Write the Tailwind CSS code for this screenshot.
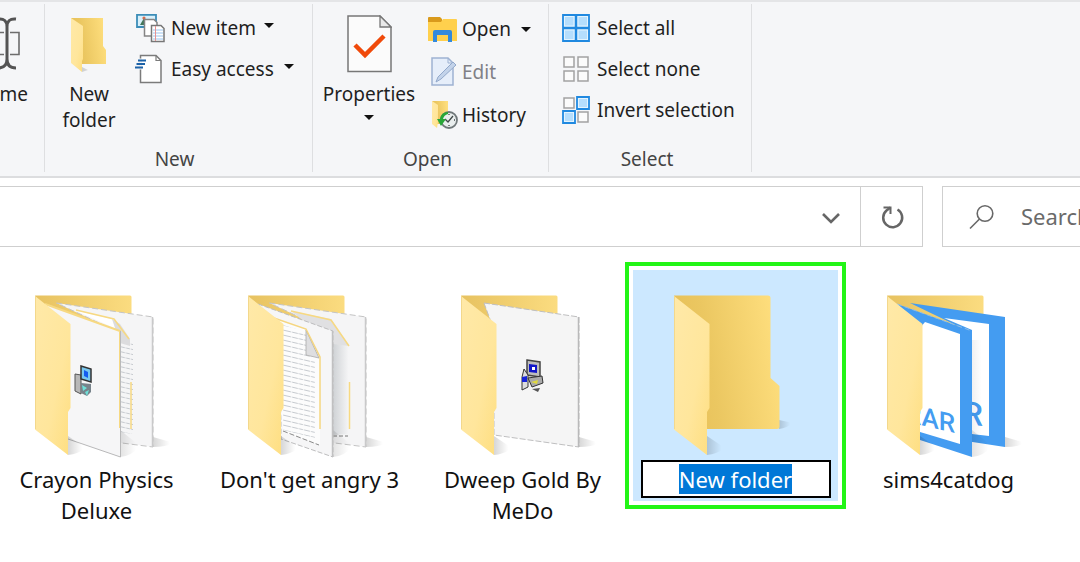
<!DOCTYPE html>
<html lang="en">
<head>
<meta charset="utf-8">
<title>File Explorer</title>
<script src="https://cdn.jsdelivr.net/npm/@tailwindcss/browser@4"></script>
</head>
<body class="min-h-screen overflow-x-hidden bg-white font-['Noto_Sans','Open_Sans',sans-serif] text-[#1f1f1f]">

<svg class="absolute h-0 w-0" aria-hidden="true">
  <defs>
    <linearGradient id="flap" x1="0" y1="0" x2="1" y2="1"><stop offset="0" stop-color="#ffe9a8"/><stop offset=".6" stop-color="#ffe69c"/><stop offset="1" stop-color="#fede80"/></linearGradient>
    <linearGradient id="back" x1="0" y1=".6" x2="1" y2=".4"><stop offset="0" stop-color="#e6bf57"/><stop offset=".35" stop-color="#ebc761"/><stop offset="1" stop-color="#fede7d"/></linearGradient>
    <linearGradient id="rim" x1="0" y1="0" x2="1" y2="0"><stop offset="0" stop-color="#e7c260"/><stop offset="1" stop-color="#fbdc80"/></linearGradient>
    <linearGradient id="shade" x1="0" y1="0" x2="1" y2="0"><stop offset="0" stop-color="#000" stop-opacity=".16"/><stop offset=".8" stop-color="#000" stop-opacity="0"/></linearGradient>
    <linearGradient id="pageShade" x1="0" y1="0" x2="1" y2="0"><stop offset="0" stop-color="#cfd2d5"/><stop offset="1" stop-color="#f6f6f7"/></linearGradient>
    <pattern id="lines" width="40" height="5" patternUnits="userSpaceOnUse" patternTransform="skewY(13)"><path d="M0 2.500H40" stroke="#c6cacf" stroke-width="1" stroke-dasharray="4 1 6 1"/></pattern>
    <symbol id="folder-flap" viewBox="0 0 205 188"><path d="M74 166L92 178Q84 184 74 185Z" fill="url(#shade)"/><path d="M41 26L76.500 54V138L74 142V185L41 159.500Z" fill="url(#flap)"/><path d="M41.500 26V159" stroke="#f3d88c" stroke-width="1"/></symbol>
    <symbol id="folder-rim" viewBox="0 0 205 188"><path d="M41 25.500H136Q137.500 25.500 137.500 27V60H60Z" fill="url(#rim)"/><path d="M159 167L180 173Q172 177 159 177Z" fill="url(#shade)"/></symbol>
  </defs>
</svg>

<header class="overflow-hidden border-t-2 border-b-2 border-t-[#e4e5e7] border-b-[#dcdddf] bg-[#f5f6f8] pt-0.5 pb-1 text-[19px] leading-[26px]">
  <div class="flex h-[168px]">
    <section class="flex w-[45px] justify-end border-r border-[#dedfe1]" aria-label="Organize">
      <button class="flex shrink-0 flex-col items-end pt-[11px] pr-4">
        <svg class="mr-2 h-[56px] w-[40px]" viewBox="0 0 40 56" fill="none" aria-hidden="true"><path d="M0 17.500H39V39.500H0" stroke="#6d6d6d" stroke-width="1.600"/><path d="M27 16V41" stroke="#f5f6f8" stroke-width="6"/><path d="M18 4Q27 3 27 12V44Q27 53 18 53M36 4Q27 3 27 12V44Q27 53 36 53" stroke="#545454" stroke-width="3"/></svg>
        <span class="mt-2.5">Rename</span>
      </button>
    </section>

    <section class="flex w-[268px] flex-col justify-between border-r border-[#dedfe1]" aria-labelledby="g-new">
      <div class="flex">
        <button class="ml-[11px] flex w-[66px] flex-col items-center pt-[11px]">
          <svg class="h-[58px] w-[44px]" viewBox="0 0 44 58" aria-hidden="true"><path d="M4 3H36V31L39 35V49H14Z" fill="url(#back)"/><path d="M4 3L16 11V44L15 46V57L4 48Z" fill="url(#flap)"/><path d="M15 52L21 55L15 57ZM39 45L43 47L39 49Z" fill="url(#shade)"/></svg>
          <span class="mt-2">New<br>folder</span>
        </button>
        <div class="ml-[13px] flex flex-col items-start gap-[11px] pt-[9px]">
          <button class="flex h-[30px] items-center gap-1.5">
            <svg class="h-[30px] w-[30px]" viewBox="0 0 30 30" fill="none" aria-hidden="true"><path d="M2 1.800H21V14H2Z" fill="#d8f0fb" stroke="#3c8db8" stroke-width="1.800"/><path d="M5 12L9 5L12 12Z" fill="#42765a"/><circle cx="9" cy="5" r="1.600" fill="#d76a4b"/><path d="M9.500 6.500H19L22 9.500V23H9.500Z" fill="#fff" stroke="#858585" stroke-width="1.500"/><path d="M16.500 12.500H26L29 15.500V28.500H16.500Z" fill="#fff" stroke="#777" stroke-width="1.500"/><path d="M18 17H28M18 20H28M18 23H28M18 26H28" stroke="#9ac4ee"/><path d="M20.500 13V28" stroke="#e79393"/></svg>
            <span>New item</span>
            <svg class="mb-1.5 ml-0.5 h-[5px] w-[10px]" viewBox="0 0 10 5" aria-hidden="true"><path d="M0 0H10L5 5Z" fill="#111"/></svg>
          </button>
          <button class="flex h-[30px] items-center gap-1.5">
            <svg class="h-[30px] w-[30px]" viewBox="0 0 30 30" fill="none" aria-hidden="true"><path d="M5.500 1.500H21L26 6.500V28.500H5.500Z" fill="#fff" stroke="#7b7b7b" stroke-width="1.500"/><path d="M21 1.500V6.500H26" stroke="#7b7b7b" stroke-width="1.200"/><path d="M5.500 4.500V15.500" stroke="#f5f6f8" stroke-width="2.500"/><path d="M3 6.500H11M1.500 10H10M0 13.500H8" stroke="#1c62a8" stroke-width="1.800"/></svg>
            <span>Easy access</span>
            <svg class="mb-1.5 ml-1 h-[5px] w-[10px]" viewBox="0 0 10 5" aria-hidden="true"><path d="M0 0H10L5 5Z" fill="#111"/></svg>
          </button>
        </div>
      </div>
      <h2 id="g-new" class="pr-2 text-center text-[#444]">New</h2>
    </section>

    <section class="flex w-[236px] flex-col justify-between border-r border-[#dedfe1]" aria-labelledby="g-open">
      <div class="flex">
        <button class="ml-2 flex w-[96px] flex-col items-center pt-[11px]">
          <svg class="h-[58px] w-[46px]" viewBox="0 0 46 58" fill="none" aria-hidden="true"><path d="M2 1H34L45 12V56.500H2Z" fill="#fbfbfb" stroke="#777" stroke-width="1.500"/><path d="M34 1V12H45Z" fill="#e9e9e9" stroke="#777" stroke-width="1.300"/><path d="M9 30L19 40L38 21" stroke="#f04a0a" stroke-width="4.500"/></svg>
          <span class="mt-2">Properties</span>
          <svg class="mt-2 h-[5px] w-[10px]" viewBox="0 0 10 5" aria-hidden="true"><path d="M0 0H10L5 5Z" fill="#111"/></svg>
        </button>
        <div class="ml-[11px] flex flex-col items-start gap-[13px] pt-2.5">
          <button class="flex h-[30px] items-center gap-1">
            <svg class="h-[30px] w-[30px]" viewBox="0 0 30 30" aria-hidden="true"><path d="M0 4Q0 3 1 3H12L14 5V8H0Z" fill="#d99a1c"/><path d="M0 8H13L15 5H28Q29 5 29 6V27H0Z" fill="#ffd04d"/><path d="M5 28V18Q5 16 7 16H22Q24 16 24 18V28H20V21H9V28Z" fill="#3289dc"/></svg>
            <span>Open</span>
            <svg class="ml-1.5 h-[5px] w-[10px]" viewBox="0 0 10 5" aria-hidden="true"><path d="M0 0H10L5 5Z" fill="#111"/></svg>
          </button>
          <button class="flex h-[30px] items-center gap-1 text-[#808086]" disabled>
            <svg class="h-[30px] w-[30px]" viewBox="0 0 30 30" fill="none" aria-hidden="true"><path d="M4 1H20L25 6V28H4Z" fill="#e6eefa" stroke="#9eb2d2" stroke-width="1.500"/><path d="M20 1V6H25" stroke="#9eb2d2"/><path d="M8 25L10 20L25 5L28 8L13 22Z" fill="#c3d3ea" stroke="#93a9cb"/></svg>
            <span>Edit</span>
          </button>
          <button class="flex h-[30px] items-center gap-1">
            <svg class="h-[30px] w-[30px]" viewBox="0 0 30 30" fill="none" aria-hidden="true"><path d="M4 1H20V24H8Z" fill="url(#back)"/><path d="M4 1L10 5V22L9 28L4 24Z" fill="url(#flap)"/><circle cx="21" cy="20" r="8" fill="#e9eeee" stroke="#70787a" stroke-width="1.800"/><path d="M17 19L20 22L25 16M21 14V15M21 25V26M26 20H27" stroke="#404848" stroke-width="1.300"/><path d="M20 12Q13 12 12 19H9L13 26L18 19H15Q16 15 20 14Z" fill="#28a638"/></svg>
            <span>History</span>
          </button>
        </div>
      </div>
      <h2 id="g-open" class="pr-1.5 text-center text-[#444]">Open</h2>
    </section>

    <section class="flex w-[203px] flex-col justify-between border-r border-[#dedfe1]" aria-labelledby="g-select">
      <div class="ml-3 flex flex-col items-start gap-[11px] pt-[9px]">
        <button class="flex h-[30px] items-center gap-1.5 whitespace-nowrap">
          <svg class="h-[30px] w-[30px]" viewBox="0 0 30 30" fill="#b5defd" stroke="#2089e0" aria-hidden="true"><path d="M2 2H28V28H2Z" fill="#e4f4fe" stroke-width="1.800"/><path d="M15 2V28M2 15H28" stroke-width="2.500"/><path d="M4 4H12.500V12.500H4ZM17.500 4H26V12.500H17.500ZM4 17.500H12.500V26H4ZM17.500 17.500H26V26H17.500Z" stroke="none"/></svg>
          <span>Select all</span>
        </button>
        <button class="flex h-[30px] items-center gap-1.5 whitespace-nowrap">
          <svg class="h-[30px] w-[30px]" viewBox="0 0 30 30" fill="#fbfbfb" stroke="#a2a2a2" stroke-width="1.500" aria-hidden="true"><path d="M3 3H13V13H3ZM17 3H27V13H17ZM3 17H13V27H3ZM17 17H27V27H17Z"/></svg>
          <span>Select none</span>
        </button>
        <button class="flex h-[30px] items-center gap-1.5 whitespace-nowrap">
          <svg class="h-[30px] w-[30px]" viewBox="0 0 30 30" aria-hidden="true"><path d="M3 3H13V13H3ZM17 17H27V27H17Z" fill="#fbfbfb" stroke="#a2a2a2" stroke-width="1.500"/><path d="M16 2H28V14H16ZM2 16H14V28H2Z" fill="#e4f4fe" stroke="#2089e0" stroke-width="1.800"/><path d="M18 4H26V12H18ZM4 18H12V26H4Z" fill="#b5defd"/></svg>
          <span>Invert selection</span>
        </button>
      </div>
      <h2 id="g-select" class="pr-1.5 text-center text-[#444]">Select</h2>
    </section>
  </div>
</header>

<nav class="mt-2 flex h-[61px] gap-[19px] overflow-hidden" aria-label="Address and search">
  <div class="flex min-w-0 flex-1 border border-l-0 border-[#cfcfcf]">
    <input type="text" aria-label="Address" class="min-w-0 flex-1 outline-none">
    <button class="flex w-[58px] items-center justify-center" aria-label="Previous locations">
      <svg class="h-5 w-5" viewBox="0 0 20 20" fill="none" aria-hidden="true"><path d="M2 7L10 15L18 7" stroke="#666" stroke-width="2.600"/></svg>
    </button>
    <button class="flex w-[62px] items-center justify-center border-l border-[#cfcfcf]" aria-label="Refresh">
      <svg class="h-7 w-7" viewBox="0 0 28 28" fill="none" stroke="#666" stroke-width="2.500" aria-hidden="true"><path d="M19.500 6.500A9.500 9.500 0 1 1 8.500 7.500L12.500 4.500"/><path d="M5.500 4.500H12.500V11" stroke-width="2"/></svg>
    </button>
  </div>
  <label class="flex w-[138px] items-center overflow-hidden border border-r-0 border-[#cfcfcf] pl-[26px]">
    <svg class="h-[26px] w-[26px] shrink-0" viewBox="0 0 26 26" fill="none" stroke="#686868" stroke-width="1.600" aria-hidden="true"><circle cx="16" cy="9.500" r="7.800"/><path d="M10.500 15L1 24.500"/></svg>
    <input type="search" aria-label="Search" placeholder="Search New folder" class="ml-[26px] w-[200px] shrink-0 text-[22px] outline-none placeholder:text-[#6a6a6a]">
  </label>
</nav>

<main class="pt-[23px]">
  <ul class="-ml-1.5 flex flex-wrap gap-2 text-[22px] leading-[31px] text-[#111]">
    <li class="w-[205px] text-center">
      <svg class="h-[188px] w-full" viewBox="0 0 205 188" aria-hidden="true">
        <use href="#folder-rim"/>
        <path d="M62.500 33L159 47V177L120 172V60Z" fill="#f5f5f6" stroke="#c4c4c4" stroke-dasharray="6 3"/>
        <path d="M158.500 47V177" stroke="#c9c9ca" stroke-width="1.500"/>
        <path d="M126 72H139V164L126 162Z" fill="url(#lines)"/>
        <path d="M80 40L118 49L125 60Z" fill="#fff"/>
        <path d="M118 49L126 54L136 69V76L126 73Z" fill="#dcdcde"/><path d="M82 40L120 49L135 69M137 112V159" fill="none" stroke="#f7d982" stroke-width="1.500"/>
        <path d="M126 160L146 176Q138 186 126 187Z" fill="url(#shade)" opacity=".7"/>
        <path d="M51 34L126 61V187L74 169V60Z" fill="#f6f6f7"/><path d="M51 34L126 61V158" fill="none" stroke="#f7d982" stroke-width="2"/><path d="M120.500 62V187L74 169" fill="none" stroke="none"/><path d="M126.500 61V187L74 169" fill="none" stroke="#b9b9ba"/>
        <use href="#folder-flap"/>
        <path d="M81 104L87 105V124L81 121Z" fill="#b8b8b8" stroke="#555"/><path d="M87 96L97 99V112L87 109Z" fill="#78c7ef" stroke="#333" stroke-width="1.500"/><path d="M90 100L94 102V108L90 106Z" fill="#145cf0"/><path d="M87 113L97 114V122L93 126L87 123Z" fill="#77838b"/><path d="M88 115L93 118L89 121ZM91 122L95 120L93 126Z" fill="#6fe0d8"/>
      </svg>
      <span class="mt-1.5 block px-4">Crayon Physics Deluxe</span>
    </li>
    <li class="w-[205px] text-center">
      <svg class="h-[188px] w-full" viewBox="0 0 205 188" aria-hidden="true">
        <use href="#folder-rim"/>
        <path d="M62.500 33L159 47V177L120 172V60Z" fill="#f5f5f6" stroke="#c4c4c4" stroke-dasharray="6 3"/>
        <path d="M158.500 47V177" stroke="#c9c9ca" stroke-width="1.500"/>
        <path d="M126 63L142 76V164L126 165Z" fill="url(#pageShade)"/>
        <path d="M84 41L124 49L142 76L126 74Z" fill="#e0e0e2"/><path d="M84 41L124 50L142 76M142.500 112V159" fill="none" stroke="#f7d982" stroke-width="1.500"/><path d="M126 166L141 166" stroke="#777" stroke-dasharray="4 2"/>
        <path d="M126 160L146 176Q138 186 126 187Z" fill="url(#shade)" opacity=".7"/>
        <path d="M51 34L126 61V187L74 169V60Z" fill="#f6f6f7" stroke="#bdbdbe" stroke-dasharray="5 2"/><path d="M125.500 61V187" stroke="#c0c0c1" stroke-width="1.500"/>
        <path d="M66 48L99 59L113 87V175L76 162Z" fill="#fcfcfc"/><path d="M76 55L99 62V84L108 90V168L76 160Z" fill="url(#lines)"/>
        <path d="M99 60L112 88L99 85Z" fill="#dedee0" stroke="#aaa" stroke-width=".8"/><path d="M67 48L99 59L113 87V159" fill="none" stroke="#f5d680" stroke-width="1.500"/><path d="M76 161L112 175" stroke="#888" stroke-dasharray="5 2"/>
        <use href="#folder-flap"/>
      </svg>
      <span class="mt-1.5 block px-1">Don't get angry 3</span>
    </li>
    <li class="w-[205px] text-center">
      <svg class="h-[188px] w-full" viewBox="0 0 205 188" aria-hidden="true">
        <use href="#folder-rim"/>
        <path d="M64 33L159 47V177L74 165V60Z" fill="#f5f5f5" stroke="#bfbfc0" stroke-dasharray="6 2"/><path d="M158.500 47V177" stroke="#b9b9ba" stroke-width="1.500"/>
        <use href="#folder-flap"/>
        <path d="M107 90L120 92V107L107 105Z" fill="#bdbdbd" stroke="#444" stroke-width="1.500"/><path d="M109 94L117 95V103L109 102Z" fill="#1015c9"/><path d="M112 97H115V100H112Z" fill="#fff"/><path d="M104 99L108 105V117L102 120V107Z" fill="#ddd" stroke="#333"/><path d="M102 107L107 106V112L102 112Z" fill="#1724d8"/><path d="M108 108L122 106L123 113L112 117Z" fill="#aaa" stroke="#333"/><path d="M111 112L118 110L117 114Z" fill="#e2da3c"/><path d="M112 119L120 118L118 122Z" fill="#555"/>
      </svg>
      <span class="mt-1.5 block px-4">Dweep Gold By MeDo</span>
    </li>
    <li class="relative h-[231px] w-[205px] bg-[#cce8ff] text-center">
      <svg class="h-[188px] w-full" viewBox="0 0 205 188" aria-hidden="true">
        <path d="M146 150L160 153Q154 158 146 159Z" fill="url(#shade)"/>
        <path d="M41 25.500H135Q137.500 25.500 137.500 28V108L146.500 116V157Q146.500 159 144 159H74Z" fill="url(#back)"/>
        <use href="#folder-flap"/>
      </svg>
      <input id="rename" type="text" value="New folder" aria-label="Folder name" autofocus class="mx-auto mt-0.5 block h-[38px] w-[190px] border-2 border-black bg-white text-center leading-[31px] outline-none selection:bg-[#0078d7] selection:text-white">
      <div class="pointer-events-none absolute -inset-2 border-4 border-[#22f516]"></div>
    </li>
    <li class="w-[205px] text-center">
      <svg class="h-[188px] w-full" viewBox="0 0 205 188" aria-hidden="true">
        <use href="#folder-rim"/>
        <path d="M64 33L159 47V177L120 171V60Z" fill="#449cf1"/><path d="M98 48L143 54V166L126 164V60Z" fill="#fff"/>
        <text transform="translate(137 156) skewY(8)" text-anchor="end" font-family="Roboto, Liberation Sans, sans-serif" font-weight="500" font-size="32" fill="#449cf1">R</text>
        <path d="M126 70H138V164H126Z" fill="url(#shade)" opacity=".35"/>
        <path d="M126 160L146 176Q138 186 126 187Z" fill="url(#shade)" opacity=".7"/>
        <path d="M51 34L126 61V187L74 170V60Z" fill="#449cf1"/><path d="M51 34L126 61" stroke="#8cbde9" stroke-dasharray="5 3"/><path d="M79 52L114 64V174L74 162V58Z" fill="#fff"/>
        <text transform="translate(109 163) skewY(13)" text-anchor="end" font-family="Roboto, Liberation Sans, sans-serif" font-weight="500" font-size="26" fill="#449cf1">RAR</text>
        <use href="#folder-flap"/>
      </svg>
      <span class="mt-1.5 block px-1">sims4catdog</span>
    </li>
  </ul>
</main>

<script>
  const renameBox = document.getElementById('rename');
  renameBox.focus();
  renameBox.select();
</script>
</body>
</html>
